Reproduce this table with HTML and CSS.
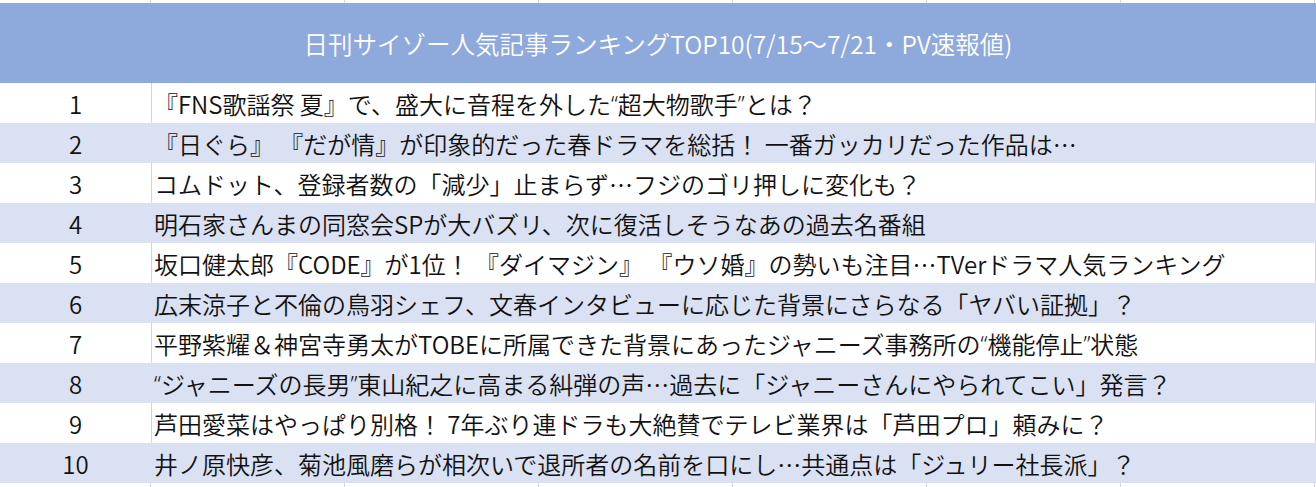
FILE: index.html
```html
<!DOCTYPE html>
<html lang="ja">
<head>
<meta charset="utf-8">
<title>日刊サイゾー人気記事ランキング</title>
<link rel="stylesheet" href="styles.css">
</head>
<body>
<div class="sheet">
  <div class="stub stub-top">
    <span class="c c1"></span><span class="c"></span><span class="c"></span><span class="c"></span><span class="c"></span><span class="c"></span><span class="c c7"></span>
  </div>
  <div class="header">日刊サイゾー人気記事ランキングTOP10(7/15〜7/21・PV速報値)</div>
  <div class="rows">
    <div class="row"><div class="num">1</div><div class="title">『FNS歌謡祭 夏』で、盛大に音程を外した<span class="lq">“</span>超大物歌手<span class="lq">”</span>とは？</div></div>
    <div class="row alt"><div class="num">2</div><div class="title">『日ぐら』 『だが情』が印象的だった春ドラマを総括！ 一番ガッカリだった作品は…</div></div>
    <div class="row"><div class="num">3</div><div class="title">コムドット、登録者数の「減少」止まらず…フジのゴリ押しに変化も？</div></div>
    <div class="row alt"><div class="num">4</div><div class="title">明石家さんまの同窓会SPが大バズリ、次に復活しそうなあの過去名番組</div></div>
    <div class="row"><div class="num">5</div><div class="title">坂口健太郎『CODE』が1位！ 『ダイマジン』 『ウソ婚』の勢いも注目…TVerドラマ人気ランキング</div></div>
    <div class="row alt"><div class="num">6</div><div class="title">広末涼子と不倫の鳥羽シェフ、文春インタビューに応じた背景にさらなる「ヤバい証拠」？</div></div>
    <div class="row"><div class="num">7</div><div class="title">平野紫耀＆神宮寺勇太がTOBEに所属できた背景にあったジャニーズ事務所の<span class="lq">“</span>機能停止<span class="lq">”</span>状態</div></div>
    <div class="row alt"><div class="num">8</div><div class="title"><span class="lq">“</span>ジャニーズの長男<span class="lq">”</span>東山紀之に高まる糾弾の声…過去に「ジャニーさんにやられてこい」発言？</div></div>
    <div class="row"><div class="num">9</div><div class="title">芦田愛菜はやっぱり別格！ 7年ぶり連ドラも大絶賛でテレビ業界は「芦田プロ」頼みに？</div></div>
    <div class="row alt"><div class="num">10</div><div class="title">井ノ原快彦、菊池風磨らが相次いで退所者の名前を口にし…共通点は「ジュリー社長派」？</div></div>
  </div>
  <div class="stub stub-bottom">
    <span class="c c1"></span><span class="c"></span><span class="c"></span><span class="c"></span><span class="c"></span><span class="c"></span><span class="c c7"></span>
  </div>
</div>
</body>
</html>
```
FILE: styles.css
```css
html, body {
  margin: 0;
  padding: 0;
  background: #ffffff;
}

body {
  font-family: "Noto Sans CJK JP", "Noto Sans", sans-serif;
  font-weight: 350;
  color: #111111;
  width: 1316px;
  height: 487px;
  overflow: hidden;
}

.sheet {
  display: flex;
  flex-direction: column;
  width: 1316px;
}

.stub {
  display: grid;
  grid-template-columns: 151px repeat(5, 194px) 194px;
  width: 1316px;
}

.stub-top {
  height: 3px;
}

.stub-bottom {
  height: 4px;
}

.c {
  border-right: 1px solid #d4d4d4;
}

.c1 {
  width: 151px;
  box-sizing: border-box;
}

.header {
  height: 80px;
  background: #8ea9db;
  color: #ffffff;
  font-size: 24.5px;
  display: flex;
  align-items: center;
  justify-content: center;
  padding-top: 1px;
  box-sizing: border-box;
}

.rows {
  display: flex;
  flex-direction: column;
}

.row {
  display: grid;
  grid-template-columns: 151px 1fr;
  height: 40px;
  background: #ffffff;
  border-right: 1px solid #d4d4d4;
  box-sizing: border-box;
}

.row.alt {
  background: #d9e1f2;
  border-right-color: #d9e1f2;
}

.num {
  display: flex;
  align-items: center;
  justify-content: center;
  font-size: 24px;
  border-right: 1px solid #d4d4d4;
  box-sizing: border-box;
  width: 152px;
}

.row.alt .num {
  border-right-color: #d9e1f2;
}

.title {
  display: flex;
  align-items: center;
  font-size: 24px;
  padding-left: 3px;
  white-space: pre;
}

.lq {
  font-family: "Noto Sans", "DejaVu Sans", sans-serif;
  font-size: 22px;
}
```
